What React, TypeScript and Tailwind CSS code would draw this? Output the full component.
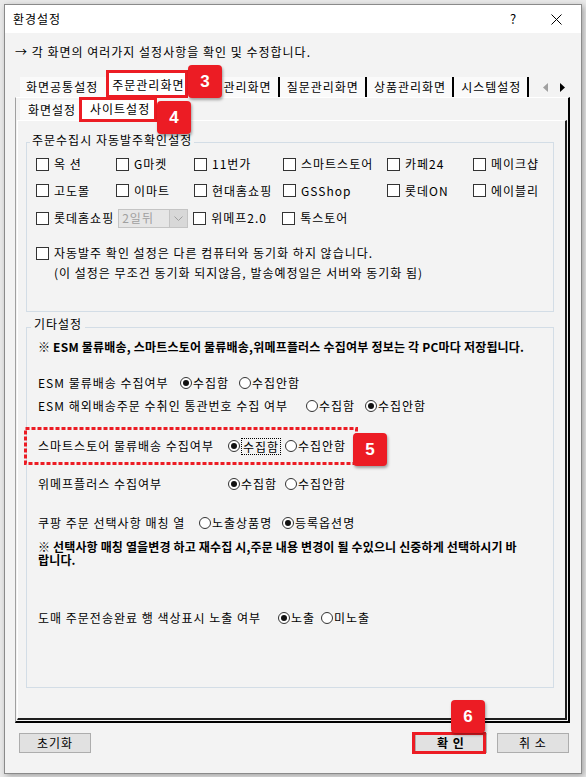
const CheckBox = () => (
  <span className="block h-[13px] w-[13px] shrink-0 border border-[#333333] bg-white" />
);

function CheckItem({ label, w = "" }: { label: string; w?: string }) {
  return (
    <div className={`flex shrink-0 items-center ${w}`}>
      <CheckBox />
      <span className="ml-[5px] whitespace-nowrap">{label}</span>
    </div>
  );
}

function Radio({
  label,
  checked = false,
  focus = false,
  w = "",
}: {
  label: string;
  checked?: boolean;
  focus?: boolean;
  w?: string;
}) {
  return (
    <div className={`flex shrink-0 items-center ${w}`}>
      <span className="flex h-[12px] w-[12px] shrink-0 items-center justify-center rounded-full border border-[#333333] bg-white">
        {checked && <span className="block h-[6px] w-[6px] rounded-full bg-[#111111]" />}
      </span>
      <span
        className={
          focus
            ? "ml-[1px] whitespace-nowrap border border-dotted border-black px-[1px] leading-[15px]"
            : "ml-[1px] whitespace-nowrap"
        }
      >
        {label}
      </span>
    </div>
  );
}

function Badge({ n, pos }: { n: string; pos: string }) {
  return (
    <div
      className={`absolute ${pos} flex h-[33px] w-[34px] items-center justify-center rounded-[4px] bg-[#ec1c24] font-['Liberation_Sans',Arial,sans-serif] text-[17px] font-bold tracking-normal text-white shadow-[1px_2px_3px_rgba(0,0,0,0.35)]`}
    >
      {n}
    </div>
  );
}

export default function App() {
  return (
    <div className="relative h-[777px] w-[586px] overflow-hidden bg-[#e9e9e9] pl-[4px] pt-[4px] font-['Noto_Sans_CJK_KR',sans-serif] text-[12px] leading-[14px] tracking-[1px] text-black">
      {/* dialog */}
      <div className="flex h-[770px] w-[578px] flex-col border border-[#8a8a8a] bg-[#f3f3f3] shadow-[2px_2px_6px_rgba(0,0,0,0.3)]">
        {/* title bar */}
        <div className="flex h-[28px] shrink-0 items-center bg-white pl-[8px]">
          <span>환경설정</span>
          <span className="ml-auto flex w-[40px] justify-center text-[13px] tracking-normal">?</span>
          <span className="mr-[2px] flex w-[46px] justify-center">
            <svg width="11" height="11" viewBox="0 0 11 11">
              <path d="M0.5 0.5L10.5 10.5M10.5 0.5L0.5 10.5" stroke="#000" strokeWidth="1" />
            </svg>
          </span>
        </div>

        <div className="ml-[10px] mt-[12px] whitespace-nowrap">→ 각 화면의 여러가지 설정사항을 확인 및 수정합니다.</div>

        {/* main tabs */}
        <div className="ml-[15px] mt-[14px] flex h-[24px] items-end whitespace-nowrap">
          <div className="flex h-[20px] items-center bg-[#fafafa] pl-[6px] pr-[8px]">화면공통설정</div>
          <div className="flex h-[24px] items-center bg-white pl-[6px] pr-[6px]">주문관리화면</div>
          <div className="flex h-[20px] items-center border-r-2 border-black bg-[#fafafa] pl-[33px] pr-[6px]">관리화면</div>
          <div className="flex h-[20px] items-center border-r-2 border-black bg-[#fafafa] pl-[7px] pr-[6px]">질문관리화면</div>
          <div className="flex h-[20px] items-center border-r-2 border-black bg-[#fafafa] pl-[7px] pr-[6px]">상품관리화면</div>
          <div className="flex h-[20px] items-center border-r-2 border-black bg-[#fafafa] pl-[7px] pr-[6px]">시스템설정</div>
          <div className="flex h-[20px] items-center">
            <svg className="ml-[14px]" width="5" height="9" viewBox="0 0 5 9">
              <path d="M5 0L0 4.5L5 9Z" fill="#a0a0a0" />
            </svg>
            <svg className="ml-[12px]" width="5" height="9" viewBox="0 0 5 9">
              <path d="M0 0L5 4.5L0 9Z" fill="#000" />
            </svg>
          </div>
        </div>

        {/* outer tab page */}
        <div className="ml-[10px] w-[555px] border-b-2 border-l border-r-2 border-t border-b-black border-l-[#a0a0a0] border-r-black border-t-white pb-[1px] pl-[1px] pr-[1px]">
          <div className="flex h-[22px] items-end whitespace-nowrap">
            <div className="ml-[3px] flex h-[20px] w-[62px] items-center bg-[#fafafa] pl-[8px]">화면설정</div>
            <div className="flex h-[22px] w-[72px] items-center bg-white pl-[8px]">사이트설정</div>
          </div>

          {/* inner tab page */}
          <div className="w-[550px] border-b-2 border-l border-r-2 border-t border-b-[#1e1e1e] border-l-white border-r-[#1e1e1e] border-t-white pb-[30px]">
            {/* group 1 */}
            <fieldset className="ml-[8px] mt-[12px] w-[528px] border border-[#d3dde6]">
              <legend className="ml-[3px] px-[2px] pb-[4px] leading-[14px]">주문수집시 자동발주확인설정</legend>
              <div className="pl-[9px] pb-[28px]">
                <div className="flex h-[26px] items-center">
                  <CheckItem label="옥 션" w="w-[80px]" />
                  <CheckItem label="G마켓" w="w-[78px]" />
                  <CheckItem label="11번가" w="w-[89px]" />
                  <CheckItem label="스마트스토어" w="w-[104px]" />
                  <CheckItem label="카페24" w="w-[86px]" />
                  <CheckItem label="메이크샵" />
                </div>
                <div className="flex h-[27px] items-center">
                  <CheckItem label="고도몰" w="w-[80px]" />
                  <CheckItem label="이마트" w="w-[78px]" />
                  <CheckItem label="현대홈쇼핑" w="w-[89px]" />
                  <CheckItem label="GSShop" w="w-[104px]" />
                  <CheckItem label="롯데ON" w="w-[86px]" />
                  <CheckItem label="에이블리" />
                </div>
                <div className="flex h-[28px] items-center">
                  <CheckItem label="롯데홈쇼핑" />
                  <div className="ml-[4px] flex h-[19px] w-[70px] items-center border border-[#c4c4c4] bg-[#e6e6e6]">
                    <span className="flex-1 pl-[3px] text-[#a0a0a0]">2일뒤</span>
                    <span className="flex h-full w-[18px] items-center justify-center border-l border-[#c4c4c4] bg-[#d8d8d8]">
                      <svg width="9" height="5" viewBox="0 0 9 5">
                        <path d="M0.5 0.5L4.5 4.5L8.5 0.5" fill="none" stroke="#a0a0a0" strokeWidth="1" />
                      </svg>
                    </span>
                  </div>
                  <div className="ml-[5px]">
                    <CheckItem label="위메프2.0" w="w-[89px]" />
                  </div>
                  <CheckItem label="톡스토어" />
                </div>
                <div className="mt-[11px] flex items-start leading-[20px]">
                  <div className="flex h-[20px] items-center">
                    <CheckBox />
                  </div>
                  <div className="ml-[5px] whitespace-nowrap">
                    <div>자동발주 확인 설정은 다른 컴퓨터와 동기화 하지 않습니다.</div>
                    <div>(이 설정은 무조건 동기화 되지않음, 발송예정일은 서버와 동기화 됨)</div>
                  </div>
                </div>
              </div>
            </fieldset>

            {/* group 2 */}
            <fieldset className="ml-[8px] mt-[5px] w-[528px] border border-[#d3dde6]">
              <legend className="ml-[4px] px-[3px] pb-[6px] leading-[14px]">기타설정</legend>
              <div className="pl-[11px] pb-[59px]">
                <div className="pt-[3px] whitespace-nowrap font-bold tracking-[0.2px]">
                  ※ ESM 물류배송, 스마트스토어 물류배송,위메프플러스 수집여부 정보는 각 PC마다 저장됩니다.
                </div>
                <div className="mt-[19px] flex h-[20px] items-center">
                  <span className="w-[142px] shrink-0 whitespace-nowrap">ESM 물류배송 수집여부</span>
                  <Radio label="수집함" checked w="w-[59px]" />
                  <Radio label="수집안함" />
                </div>
                <div className="mt-[3px] flex h-[20px] items-center">
                  <span className="w-[268px] shrink-0 whitespace-nowrap">ESM 해외배송주문 수취인 통관번호 수집 여부</span>
                  <Radio label="수집함" w="w-[59px]" />
                  <Radio label="수집안함" checked />
                </div>
                <div className="mt-[20px] flex h-[20px] items-center">
                  <span className="w-[190px] shrink-0 whitespace-nowrap">스마트스토어 물류배송 수집여부</span>
                  <Radio label="수집함" checked focus w="w-[57px]" />
                  <Radio label="수집안함" />
                </div>
                <div className="mt-[18px] flex h-[20px] items-center">
                  <span className="w-[190px] shrink-0 whitespace-nowrap">위메프플러스 수집여부</span>
                  <Radio label="수집함" checked w="w-[57px]" />
                  <Radio label="수집안함" />
                </div>
                <div className="mt-[19px] flex h-[20px] items-center">
                  <span className="w-[161px] shrink-0 whitespace-nowrap">쿠팡 주문 선택사항 매칭 열</span>
                  <Radio label="노출상품명" w="w-[83px]" />
                  <Radio label="등록옵션명" checked />
                </div>
                <div className="mt-[7px] whitespace-nowrap font-bold leading-[13px] tracking-[0.15px]">
                  ※ 선택사항 매칭 열을변경 하고 재수집 시,주문 내용 변경이 될 수있으니 신중하게 선택하시기 바
                  <br />
                  랍니다.
                </div>
                <div className="mt-[42px] flex h-[20px] items-center">
                  <span className="w-[240px] shrink-0 whitespace-nowrap">도매 주문전송완료 행 색상표시 노출 여부</span>
                  <Radio label="노출" checked w="w-[43px]" />
                  <Radio label="미노출" />
                </div>
              </div>
            </fieldset>
          </div>
        </div>

        {/* buttons */}
        <div className="mt-[10px] flex h-[20px] items-center">
          <button className="ml-[14px] h-[20px] w-[72px] border border-[#adadad] bg-[#e1e1e1]">초기화</button>
          <button className="ml-auto h-[20px] w-[72px] border border-[#adadad] bg-[#e1e1e1] font-bold">확 인</button>
          <button className="ml-[10px] mr-[12px] h-[20px] w-[72px] border border-[#adadad] bg-[#e1e1e1]">취 소</button>
        </div>
      </div>

      {/* annotations */}
      <div className="absolute left-[106px] top-[70px] h-[28px] w-[82px] border-[3px] border-[#ec1c24]" />
      <div className="absolute left-[79px] top-[97px] h-[25px] w-[78px] border-[3px] border-[#ec1c24]" />
      <div className="absolute left-[412px] top-[732px] h-[22px] w-[74px] border-[3px] border-[#ec1c24]" />
      <svg className="absolute left-[24px] top-[427px]" width="334" height="38" viewBox="0 0 334 38">
        <rect x="1.5" y="1.5" width="331" height="35" fill="none" stroke="#ec1c24" strokeWidth="3" strokeDasharray="4 2" />
      </svg>
      <Badge n="3" pos="left-[188px] top-[65px]" />
      <Badge n="4" pos="left-[157px] top-[101px]" />
      <Badge n="5" pos="left-[353px] top-[433px]" />
      <Badge n="6" pos="left-[451px] top-[700px]" />
    </div>
  );
}
